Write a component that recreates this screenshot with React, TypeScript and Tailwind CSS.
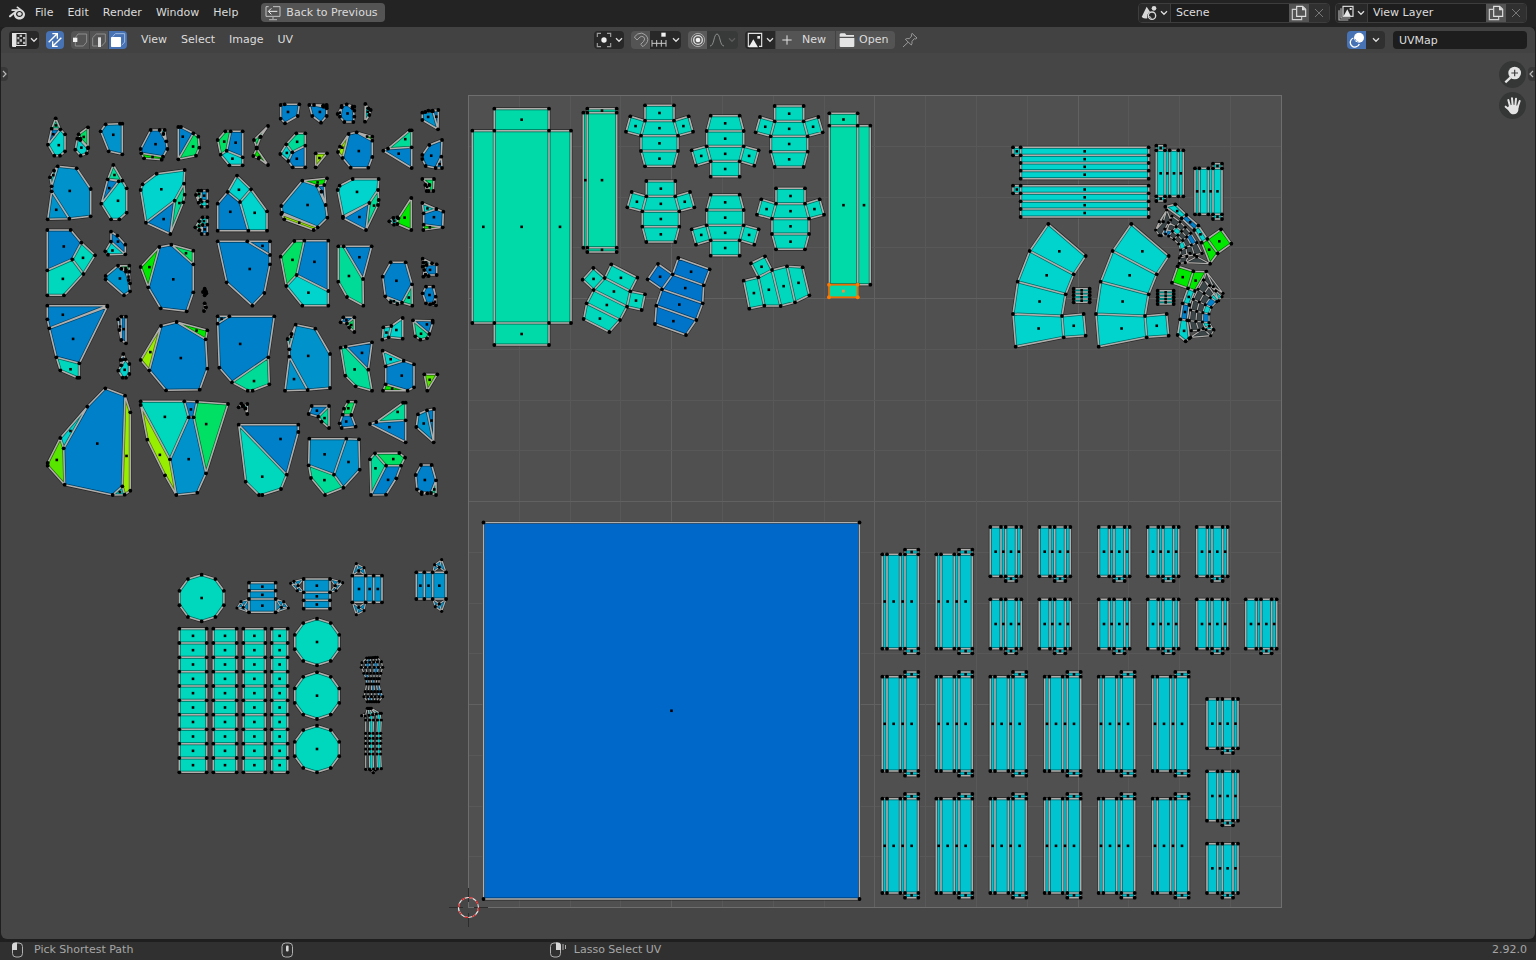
import React from "react";
import { SiBlender } from "react-icons/si";

type Pt = [number, number];
type Face = { fill: string; pts: Pt[] };

const PALETTE: Record<string, string> = {
  b: "#0080c8",
  l: "#0092ca",
  c: "#00d4cc",
  t: "#00d8be",
  n: "#00d9a8",
  m: "#00dc98",
  g: "#00e064",
  G: "#00e800",
  k: "#58e600",
  y: "#98ee00",
  r: "#0074c8",
  a: "#00c4d0",
  x: "#3c4648",
};

/* Islands are stored in thirds of a pixel, relative to the origin of their sheet. */
const place = (ox: number, oy: number, x: number, y: number): Pt => [ox + x / 3, oy + y / 3];

function sheet(ox: number, oy: number, source: string): Face[] {
  return source
    .trim()
    .split("\n")
    .map((line) => {
      const [key, ...rest] = line.trim().split(/\s+/);
      return {
        fill: PALETTE[key],
        pts: rest.map((p) => {
          const [x, y] = p.split(",").map(Number);
          return place(ox, oy, x, y);
        }),
      };
    });
}

/* A grid of rectangles between the given column and row positions. */
function grid(ox: number, oy: number, key: string, xs: number[], ys: number[]): Face[] {
  const out: Face[] = [];
  for (let i = 0; i + 1 < xs.length; i++)
    for (let j = 0; j + 1 < ys.length; j++)
      out.push({
        fill: PALETTE[key],
        pts: [
          place(ox, oy, xs[i], ys[j]),
          place(ox, oy, xs[i + 1], ys[j]),
          place(ox, oy, xs[i + 1], ys[j + 1]),
          place(ox, oy, xs[i], ys[j + 1]),
        ],
      });
  return out;
}

/* A strip of quads spanned between two polylines. */
function ribbon(ox: number, oy: number, keys: string, a: Pt[], b: Pt[], n: number): Face[] {
  const out: Face[] = [];
  const at = (i: number, t: number): Pt =>
    place(ox, oy, a[i][0] + (b[i][0] - a[i][0]) * t, a[i][1] + (b[i][1] - a[i][1]) * t);
  for (let i = 0; i + 1 < a.length; i++)
    for (let j = 0; j < n; j++)
      out.push({
        fill: PALETTE[keys[(i * n + j) % keys.length]],
        pts: [at(i, j / n), at(i, (j + 1) / n), at(i + 1, (j + 1) / n), at(i + 1, j / n)],
      });
  return out;
}

function barrel(x: number, y: number, s: number): Face[] {
  const rows: Pt[][] = [
    [[0, 0], [87, 0], [87, 46], [0, 46]],
    [[0, 46], [87, 46], [99, 91], [-12, 91]],
    [[-12, 91], [99, 91], [99, 137], [-12, 137]],
    [[-12, 137], [99, 137], [87, 183], [0, 183]],
    [[-44, 33], [0, 46], [-12, 91], [-57, 79]],
    [[87, 46], [131, 33], [144, 79], [99, 91]],
  ];
  return rows.map((r) => ({ fill: PALETTE.t, pts: r.map(([px, py]) => place(460, 90, x + px, y + py * s)) }));
}

function disc(x: number, y: number): Face {
  const pts: Pt[] = [];
  for (let i = 0; i < 10; i++) {
    const a = (i * Math.PI) / 5;
    pts.push(place(160, 550, x + 70 * Math.sin(a), y - 70 * Math.cos(a)));
  }
  return { fill: PALETTE.t, pts };
}

function tallPlank(x: number, y: number): Face[] {
  return [
    ...grid(870, 510, "a", [x, x + 14, x + 54, x + 68, x + 108], [y, y + 283]),
    ...grid(870, 510, "a", [x + 68, x + 108], [y - 14, y]),
    ...grid(870, 510, "a", [x + 68, x + 108], [y + 283, y + 297]),
  ];
}

function shortPlank(x: number, y: number): Face[] {
  return [
    ...grid(870, 510, "a", [x, x + 32, x + 46, x + 78, x + 93], [y, y + 148]),
    ...grid(870, 510, "a", [x + 46, x + 78], [y + 148, y + 162]),
  ];
}

const rocksA = sheet(30, 90, `
m 77,85 65,116 91,118
b 65,116 91,118 54,164
c 91,118 105,133 105,184 90,197 73,197 54,164
g 174,112 174,172 151,146 146,133
c 151,150 174,175 170,190 152,197 136,179 142,146
l 227,103 270,101 277,101 277,193 236,184 212,124
b 362,120 389,120 409,154 412,177 399,200 334,190 332,177
G 334,190 399,200 395,209 342,205
c 389,120 404,120 409,154 400,132
b 445,111 453,111 490,130 445,208
g 490,130 505,140 508,173 498,197 445,208
g 586,124 602,124 590,182 572,194 563,150
b 602,124 638,124 638,202 590,182
c 572,194 590,182 638,202 638,226 598,226
l 83,229 140,235 182,297 182,379 118,386 65,304 65,289
l 65,304 118,386 53,388
c 83,229 72,242 60,262 65,289
m 250,225 277,272 233,268
b 233,268 266,274 214,341
c 266,274 277,272 290,295 290,368 268,388 243,388 214,341
c 464,240 462,281 434,332 348,398 332,300 338,283 380,251
b 434,332 348,398 421,432
m 462,281 464,314 460,337 421,432 434,332
l 514,302 532,302 532,334 512,330
m 498,315 505,302 514,302 512,330
c 498,315 512,330 532,334 532,350 515,350 506,338
c 532,382 518,382 508,394 518,405 532,404
b 518,405 532,404 532,432 515,432
m 508,394 496,412 508,420 518,405
c 621,257 663,298 630,336 593,306
b 593,306 630,336 655,422 563,422 563,341
c 663,298 711,364 711,422 655,422 630,336
b 52,420 122,420 154,458 127,508 52,541
t 154,458 195,496 160,552 127,508
t 52,541 127,508 160,552 102,616 52,616
b 243,425 262,437 286,464 286,493 243,455
c 243,455 286,493 234,494 226,484
l 264,527 274,536 288,545 296,570 300,604 282,616 227,568 227,558
g 264,527 298,527 298,545 288,540
b 288,545 298,545 300,580 296,570
b 424,464 490,523 490,607 470,664 392,655 355,592 388,471
G 388,471 332,531 355,592
g 424,464 490,482 490,523
x 524,596 528,605 519,606
x 524,640 528,652 522,663
x 524,600 529,610 524,616
b 563,454 652,454 720,495 720,523 703,609 667,647 590,577
b 652,454 720,454 720,495
`);

const rocksB = sheet(30, 290, `
b 52,47 232,47 58,115 52,88
b 232,50 148,220 79,202 58,115
t 79,202 148,220 148,263 142,263 91,241
b 264,88 274,80 274,150 268,120
b 274,80 288,80 288,160 274,150
b 280,192 286,208 274,226 272,210
c 286,208 298,222 298,252 288,263 278,263 265,242 274,226
b 393,108 440,96 527,148 532,236 509,299 408,301 358,241
y 393,108 332,210 358,241
G 440,96 532,121 527,148
b 598,79 733,79 715,202 606,277 568,233 563,101
l 563,79 598,79 563,101
m 715,202 718,283 668,302 653,302 606,277
b 226,295 285,317 277,589 248,615 104,584 101,475 172,350
c 172,350 101,475 91,444
k 91,444 101,475 104,584 53,527 53,519
y 285,317 301,367 301,602 284,614 277,589
c 248,615 277,589 284,614
t 332,334 463,334 476,382 420,508 332,345
b 463,334 501,335 491,382 476,382
g 501,335 594,342 528,550 491,382
l 476,382 491,382 528,550 502,608 439,615 420,508
y 332,345 420,508 439,615 405,556 352,449
x 626,352 634,341 646,356 640,348
c 640,348 652,342 652,372 646,356
b 626,404 805,404 805,426 770,554
t 626,404 770,554 753,597 697,615 687,615 647,575
`);

const rocksC = sheet(240, 90, `
b 122,45 134,43 178,43 173,78 135,100 122,86
b 208,45 250,46 260,50 260,78 243,98 217,78
c 222,45 260,45 260,55 250,50
b 320,43 338,50 343,80 340,96 313,96 300,80 305,48
c 320,43 343,50 343,62 338,55
c 305,52 300,80 293,72
c 376,42 385,55 392,60 388,75 375,95
l 547,68 556,66 578,62 594,118 547,90
b 578,62 595,60 594,118
c 556,66 565,62 595,60 578,64
g 84,108 42,150 50,172 62,140
G 40,198 50,176 84,225 56,205
m 169,130 196,130 196,167 157,187 139,163
c 139,163 157,187 145,213 121,192
b 157,187 196,167 196,232 158,232 145,213
y 227,190 261,190 227,232
b 326,132 350,127 397,152 397,201 385,233 332,233 308,204
y 326,132 300,170 294,186 308,204
G 350,127 397,140 397,152
m 509,121 515,121 515,172 444,176
b 430,182 444,176 515,172 515,234
b 606,150 604,200 587,234 557,228 547,207 547,195 568,165
b 604,200 606,234 587,234
l 187,272 231,287 257,345 262,383 233,412 126,368 124,348
G 187,272 261,265 253,285 231,287
b 231,287 253,285 257,345 244,305
y 124,372 233,412 221,420 133,388
c 338,267 416,267 414,300 388,339 309,380 293,300 299,287
b 388,339 378,420 309,384
m 414,300 416,330 414,345 378,420 388,339
g 547,267 582,267 580,303 566,303 568,285
c 556,285 568,285 560,303
G 514,324 514,420 472,402 475,385
c 448,394 460,384 472,382 472,402 462,404
c 547,339 589,357 551,370
b 551,370 589,357 610,365 608,412 551,404
G 551,404 608,412 550,420
g 163,453 193,452 170,555 139,588 122,500
b 193,452 265,452 265,603 170,555
c 170,555 265,603 265,647 187,647 139,588
b 311,469 395,469 369,567
m 295,469 311,469 369,567 370,647 321,621 295,575
b 452,517 497,517 516,583 486,638 436,619 428,560
m 516,583 517,647 486,638
c 436,619 486,638 472,642 452,636
b 560,525 590,523 590,555 557,555 553,540
c 548,506 576,520 560,525 550,518
g 550,518 560,525 553,540 548,530
m 553,540 566,558 550,560
b 558,590 580,590 587,620 580,640 558,640 548,610
c 558,640 580,640 588,646 570,643
m 580,640 587,620 588,646
`);

const rocksD = sheet(240, 290, `
b 310,82 343,82 321,100 302,97
g 343,82 343,126 328,112 321,100
c 488,84 488,146 446,142 454,108
c 430,112 454,108 446,142 427,149
b 519,91 578,92 578,98 568,132
m 519,91 568,132 561,145 541,149 526,139
l 167,104 226,116 270,192 270,294 203,300 148,200 148,178
l 148,200 203,300 135,302
c 167,104 155,132 143,147 148,178
b 317,170 396,157 385,239
m 302,173 317,170 385,239 396,302 347,289 316,257
c 428,182 491,212 437,229
b 437,229 491,212 522,223 522,292 503,302 437,283
G 437,283 503,302 429,302
k 553,253 592,253 562,302
b 215,348 267,348 235,380 206,372
m 267,348 267,414 245,395 235,380
g 324,335 347,335 334,375 308,374 312,356
b 308,374 334,375 347,410 305,414 299,400
m 489,338 497,338 497,391 409,396
b 390,402 409,396 497,391 497,457
l 534,373 561,361 581,457 529,411
b 561,361 582,357 581,457
l 208,446 319,446 282,554 206,526
l 319,446 357,448 359,539 310,593 282,554
m 206,526 282,554 310,593 255,615 213,564
g 405,490 478,489 495,503 483,527 438,527
m 390,508 405,490 438,527 393,615
b 438,527 483,527 469,565 438,614 393,615
b 543,525 575,525 588,571 573,609 545,607 531,598 527,555
m 588,571 588,615 573,609
c 531,598 545,607 562,610 545,612
`);

const hourglass = ribbon(160, 550, "xbxxxxb",
  [[620, 324], [606, 338], [604, 352], [612, 370], [618, 386], [620, 402], [616, 425], [612, 440], [622, 455]],
  [[652, 322], [664, 335], [668, 352], [662, 370], [658, 386], [656, 402], [662, 425], [668, 440], [656, 455]], 5);
const column = ribbon(160, 550, "xcxc",
  [[622, 475], [616, 498], [617, 510], [617, 550], [617, 565], [617, 580], [617, 597], [617, 612], [617, 658]],
  [[634, 475], [660, 490], [664, 510], [662, 550], [662, 565], [662, 580], [662, 597], [662, 612], [664, 656]], 4);

const wings = sheet(160, 550, `
l 267,147 243,155 250,172
l 243,155 231,174 250,172
l 231,174 267,187 250,172
l 267,147 250,172 267,187
l 347,147 371,155 364,172
l 371,155 385,174 364,172
l 385,174 347,187 364,172
l 347,147 364,172 347,187
l 431,87 402,94 414,107
l 402,94 392,100 414,107
l 392,100 412,122 414,107
l 412,122 431,127 414,107
l 510,87 538,94 526,107
l 538,94 548,98 526,107
l 548,98 528,122 526,107
l 528,122 510,127 526,107
l 577,77 589,41 596,62
l 589,41 612,53 596,62
l 612,53 617,77 596,62
l 577,157 589,194 596,172
l 589,194 612,182 596,172
l 612,182 617,157 596,172
l 858,67 845,29 838,52
l 845,29 824,44 838,52
l 824,44 818,67 838,52
l 858,147 845,184 838,162
l 845,184 826,170 838,162
l 826,170 818,147 838,162
x 605,497 618,490 618,500
x 650,492 664,490 660,502
x 632,660 646,660 640,668
`);

const props = [
  ...grid(160, 550, "l", [267, 347], [98, 122, 147, 187]),
  ...grid(160, 550, "l", [431, 510], [87, 127, 151, 176]),
  ...grid(160, 550, "l", [577, 617, 641, 666], [77, 157]),
  ...grid(160, 550, "l", [769, 793, 818, 858], [67, 147]),
  ...[[58, 140], [160, 230], [250, 316], [335, 383]].flatMap((xs) =>
    grid(160, 550, "t", xs, [236, 279, 322, 365, 408, 451, 494, 538, 581, 624, 667])
  ),
  disc(125, 144),
  disc(471, 276),
  disc(471, 437),
  disc(471, 597),
];

const crates = [
  ...sheet(460, 90, `
n 103,56 267,56 267,122 103,122
n 37,122 103,122 103,699 37,699
n 103,122 267,122 267,699 103,699
n 267,122 333,122 333,699 267,699
n 103,699 267,699 267,765 103,765
n 382,56 470,56 470,68 382,68
n 370,68 382,68 382,473 370,473
n 382,68 470,68 470,473 382,473
n 382,473 470,473 470,486 382,486
n 1108,70 1193,70 1193,107 1108,107
n 1108,107 1193,107 1193,584 1108,584
n 1193,107 1231,107 1231,584 1193,584
t 454,523 532,563 511,604 434,564
t 434,564 511,604 501,650 401,600
t 401,600 501,650 480,690 380,640
t 380,640 480,690 448,726 371,687
t 400,534 434,564 401,600 368,569
t 511,604 555,613 545,660 501,650
r 655,504 749,538 731,586 638,553
r 638,553 731,586 728,640 606,598
r 606,598 728,640 709,690 589,647
r 589,647 709,690 678,735 585,702
r 594,522 638,553 606,598 563,568
t 851,572 895,562 913,647 868,656
t 895,562 936,540 962,648 913,647
t 936,540 981,529 1005,637 962,648
t 981,529 1028,532 1048,616 1005,637
t 873,520 915,499 936,540 895,562
`),
  ...barrel(555, 46, 1),
  ...barrel(944, 48, 1),
  ...barrel(559, 273, 1),
  ...barrel(948, 295, 1),
  ...barrel(752, 260, -1),
  ...barrel(752, 497, -1),
];

const ARCH = `
c 145,282 257,378 221,433 89,363
c 89,363 221,433 197,493 53,455
c 53,455 197,493 186,558 39,552
c 39,552 186,558 191,622 47,650
c 186,558 251,552 257,617 191,622
`;

const arches = [
  ...sheet(1000, 130, ARCH),
  ...sheet(1083, 130, ARCH),
  ...sheet(1000, 130, `
c 496,230 526,223 559,255 545,265
b 545,265 559,255 595,287 583,300
c 583,300 595,287 622,327 605,338
G 605,338 622,327 653,370 630,401
G 622,327 663,298 694,341 653,370
G 533,409 580,424 564,475 516,458
G 580,424 619,425 585,483 564,475
c 564,475 585,483 568,525 548,520
b 548,520 568,525 562,571 541,568
c 541,568 562,571 568,625 557,634 533,615
`),
  ...grid(1000, 130, "c", [62, 446], [52, 76, 99, 122, 146]),
  ...grid(1000, 130, "c", [39, 62], [52, 76]),
  ...grid(1000, 130, "c", [62, 446], [167, 190, 214, 237, 261]),
  ...grid(1000, 130, "c", [39, 62], [167, 190]),
  ...grid(1000, 130, "c", [469, 495, 509, 535, 550], [61, 199]),
  ...grid(1000, 130, "c", [469, 495], [47, 61]),
  ...grid(1000, 130, "c", [469, 495], [199, 213]),
  ...grid(1000, 130, "c", [585, 598, 625, 639, 666], [115, 253]),
  ...grid(1000, 130, "c", [639, 666], [101, 115]),
  ...grid(1000, 130, "c", [639, 666], [253, 267]),
  ...grid(1000, 130, "c", [221, 269], [476, 486, 496, 507, 517]),
  ...grid(1000, 130, "c", [473, 521], [482, 492, 502, 512, 522]),
];

const archDetail = [
  ...sheet(1000, 130, `
c 500,240 490,275 467,300 478,275
x 500,240 512,270 497,312 478,316 467,300
x 630,401 556,398 590,380
x 556,398 538,400 542,378 570,370
x 619,425 669,490 640,470
x 619,425 640,470 656,512 612,450
x 572,622 632,617 610,596
x 632,617 642,600 628,588 610,596
`),
  ...ribbon(1000, 130, "xxbxcxx",
    [[516, 258], [540, 276], [556, 292], [572, 310], [590, 338], [606, 370]],
    [[484, 317], [506, 318], [522, 328], [536, 342], [542, 360], [538, 384]], 3),
  ...ribbon(1000, 130, "xxcxxb",
    [[610, 450], [594, 478], [580, 508], [572, 540], [568, 572], [574, 602]],
    [[666, 500], [650, 515], [634, 532], [627, 552], [627, 578], [640, 598]], 3),
];

const planks = [
  ...[37, 199].flatMap((x) => tallPlank(x, 133)),
  ...[37, 199, 361, 524, 686, 848].flatMap((x) => [...tallPlank(x, 500), ...tallPlank(x, 866)]),
  ...[361, 508, 686, 833, 980].flatMap((x) => shortPlank(x, 51)),
  ...[361, 508, 686, 833, 980, 1127].flatMap((x) => shortPlank(x, 268)),
  ...[567, 784, 1001].flatMap((y) => shortPlank(1011, y)),
];

const floor: Face[] = [{ fill: "#0068c8", pts: [[483.5, 522.5], [859.5, 522.5], [859.5, 899], [483.5, 899]] }];

const outline = (faces: Face[]) =>
  faces.map((f) => "M" + f.pts.map(([x, y]) => `${x.toFixed(1)} ${y.toFixed(1)}`).join("L") + "Z").join("");

function Islands({ faces, dense = false }: { faces: Face[]; dense?: boolean }) {
  const edges = outline(faces);
  const verts = new Map<string, Pt>();
  faces.forEach((f) => f.pts.forEach((p) => verts.set(`${p[0].toFixed(1)},${p[1].toFixed(1)}`, p)));
  return (
    <g>
      {faces.map((f, i) => (
        <path key={i} d={outline([f])} fill={f.fill} />
      ))}
      <path d={edges} fill="none" stroke="#000" strokeOpacity={0.5} strokeWidth={dense ? 2.2 : 3} strokeLinejoin="round" />
      <path d={edges} fill="none" stroke="#b0aeac" strokeWidth={dense ? 1.2 : 1.6} strokeLinejoin="round" />
      {[...verts.entries()].map(([k, [x, y]]) => (
        <circle key={k} cx={x} cy={y} r={dense ? 1.6 : 1.9} />
      ))}
      {!dense &&
        faces.map((f, i) => {
          const cx = f.pts.reduce((s, p) => s + p[0], 0) / f.pts.length;
          const cy = f.pts.reduce((s, p) => s + p[1], 0) / f.pts.length;
          return <rect key={i} x={cx - 1.3} y={cy - 1.3} width={2.6} height={2.6} />;
        })}
    </g>
  );
}

function UVCanvas() {
  const lines = Array.from({ length: 15 }, (_, i) => i + 1);
  return (
    <svg className="block h-full w-full" viewBox="1 53 1534 886" role="img" aria-label="UV layout">
      <rect x={468.5} y={95.5} width={813} height={812} fill="#505050" />
      {lines.map((i) => (
        <g key={i} stroke={i % 4 === 0 ? "#616161" : "#585858"} strokeWidth={1}>
          <path d={`M${Math.floor(468.5 + i * 50.8) + 0.5} 96V907`} />
          <path d={`M469 ${Math.floor(907.5 - i * 50.75) + 0.5}H1281`} />
        </g>
      ))}
      <rect x={468.5} y={95.5} width={813} height={812} fill="none" stroke="#6e6e6e" />
      {[rocksA, rocksB, rocksC, rocksD].map((faces, i) => (
        <Islands key={i} faces={faces} />
      ))}
      <Islands faces={wings} dense />
      {[props, crates, arches, planks, floor].map((faces, i) => (
        <Islands key={i} faces={faces} />
      ))}
      <Islands faces={[...hourglass, ...column, ...archDetail]} dense />
      <g fill="#ff7a00">
        <rect x={829} y={284.7} width={28.7} height={12.6} fill="#00d9a8" stroke="#ee6a00" strokeWidth={1.8} />
        {[829, 857.7].map((x) => [284.7, 297.3].map((y) => <circle key={`${x}-${y}`} cx={x} cy={y} r={2} />))}
        <rect x={842} y={289.7} width={2.8} height={2.8} fill="#ff8a3c" />
      </g>
      <g fill="none">
        <path d="M449 907.500h14M474 907.500h14M468.500 888v14M468.500 913v14" stroke="#2c2c2c" />
        <circle cx={468.5} cy={907.5} r={10} stroke="#e8e8e8" strokeWidth={1.2} />
        <circle cx={468.5} cy={907.5} r={10} stroke="#e02020" strokeWidth={1.2} strokeDasharray="3.93 3.93" />
      </g>
    </svg>
  );
}

function Chevron({ dim = false }: { dim?: boolean }) {
  return (
    <svg width="8" height="6" viewBox="0 0 8 6" fill="none" stroke={dim ? "#5c5c5c" : "#dcdcdc"} strokeWidth="1.3">
      <path d="M1 1.300l3 3 3-3" />
    </svg>
  );
}

function Icon({ children, className = "size-4" }: { children: React.ReactNode; className?: string }) {
  return (
    <svg viewBox="0 0 48 48" fill="none" className={`${className} shrink-0`}>
      {children}
    </svg>
  );
}

const SceneIcon = () => (
  <Icon>
    <path d="M17 5L2 36q8 6 17 4-3-14 8-20z" fill="#d8d8d8" />
    <circle cx="39" cy="10" r="7" fill="#d8d8d8" />
    <circle cx="33" cy="32" r="11" stroke="#d8d8d8" strokeWidth="4" />
    <path d="M26 33a7 7 0 0 0 6 7" stroke="#d8d8d8" strokeWidth="3" />
  </Icon>
);

const LayersIcon = () => (
  <Icon>
    <path d="M3 16v29h28M9 10v29h28" stroke="#b4b4b4" strokeWidth="3.500" />
    <rect x="15" y="4" width="30" height="30" stroke="#e0e0e0" strokeWidth="3.500" />
    <path d="M17 33l11-20 10 20z" fill="#e8e8e8" />
    <rect x="35" y="9" width="6" height="6" fill="#e0e0e0" />
  </Icon>
);

const CopyIcon = () => (
  <Icon>
    <path d="M15 13H4v31h28v-9" stroke="#cfcfcf" strokeWidth="3.500" />
    <path d="M17 4h18l9 9v21H17z" stroke="#e0e0e0" strokeWidth="3.500" />
    <path d="M33 4v12h11z" fill="#e0e0e0" />
  </Icon>
);

const CloseIcon = () => (
  <Icon>
    <path d="M12 12l24 24M36 12L12 36" stroke="#777" strokeWidth="3" />
  </Icon>
);

function DataBlock({ icon, label, value }: { icon: React.ReactNode; label: string; value: string }) {
  return (
    <div className="flex h-5 overflow-hidden rounded border border-[#3d3d3d] bg-[#1d1d1d]">
      <button aria-label={`Browse ${label}`} className="flex w-[31px] items-center justify-center gap-[3px] bg-[#282828]">
        {icon}
        <Chevron />
      </button>
      <input
        aria-label={label}
        defaultValue={value}
        className="w-[119px] border-l border-[#3d3d3d] bg-[#1d1d1d] px-[5px] text-[#dedede] outline-none"
      />
      <button aria-label={`New ${label}`} className="flex w-5 items-center justify-center bg-[#545454]">
        <CopyIcon />
      </button>
      <button aria-label={`Remove ${label}`} className="flex w-5 items-center justify-center bg-[#303030]">
        <CloseIcon />
      </button>
    </div>
  );
}

function TopBar() {
  return (
    <header className="flex h-[27px] shrink-0 items-center justify-between bg-[#232323] pr-[9px] pb-[2px] pl-2">
      <nav className="flex items-center">
        <button aria-label="Blender" className="flex w-[27px] pl-px text-[#dcdcdc]">
          <SiBlender className="size-4" />
        </button>
        <div className="flex items-center gap-3.5">
          {["File", "Edit", "Render", "Window", "Help"].map((m) => (
            <button key={m}>{m}</button>
          ))}
        </div>
        <button className="ml-[23px] flex h-[19px] items-center gap-[5px] rounded bg-[#545454] pr-[7px] pl-1">
          <Icon>
            <path d="M11 5H3v29h42V5H24" stroke="#c4c4c4" strokeWidth="3" />
            <path d="M24 35v8M12 44h24" stroke="#a4a4a4" strokeWidth="4" />
            <path d="M37 19H11M19 10l-9 9 9 9" stroke="#f0f0f0" strokeWidth="3" />
          </Icon>
          Back to Previous
        </button>
      </nav>
      <div className="flex gap-[5px]">
        <DataBlock icon={<SceneIcon />} label="Scene" value="Scene" />
        <DataBlock icon={<LayersIcon />} label="View Layer" value="View Layer" />
      </div>
    </header>
  );
}

function EditorHeader() {
  return (
    <div className="grid h-[26px] shrink-0 grid-cols-[1fr_auto_1fr] items-center rounded-t-md bg-[#424242] pr-2 pl-2">
      <div className="flex items-center">
        <button aria-label="Editor type" className="flex h-[18px] w-[30px] items-center justify-center gap-[3px] rounded bg-[#282828]">
          <Icon>
            <path d="M3 3h12v42H6q-3 0-3-3z" fill="#e4e4e4" />
            <rect x="15" y="4.500" width="30" height="36" stroke="#e4e4e4" strokeWidth="3" />
            <path d="M26 8h7v7h-7zM36 15h7v7h-7zM19 15h6v7h-6zM26 22h7v7h-7zM36 29h7v7h-7zM19 29h6v7h-6z" fill="#b8b8b8" />
          </Icon>
          <Chevron />
        </button>
        <button aria-label="UV sync selection" aria-pressed="true" className="ml-[7px] flex size-[18px] items-center justify-center rounded bg-[#4772b3]">
          <Icon>
            <path d="M5 31L29 7M16 5h15v15M17 43l26-26M32 43H17V28" stroke="#fff" strokeWidth="4" />
          </Icon>
        </button>
        <div className="ml-[7px] flex gap-px overflow-hidden rounded">
          <button aria-label="Vertex select mode" className="flex h-[18px] w-[18px] items-center justify-center bg-[#545454]">
            <Icon>
              <path d="M10 17l8-11h26v24l-10 12H10V30" stroke="#8c8c8c" strokeWidth="3" />
              <rect x="3" y="17" width="13" height="13" fill="#f0f0f0" />
            </Icon>
          </button>
          <button aria-label="Edge select mode" className="flex h-[18px] w-[18px] items-center justify-center bg-[#545454]">
            <Icon>
              <path d="M20 42H5V17L16 6h27v24L32 42" stroke="#8c8c8c" strokeWidth="3" />
              <rect x="21" y="16" width="9" height="29" fill="#dcdcdc" />
            </Icon>
          </button>
          <button aria-label="Face select mode" aria-pressed="true" className="flex h-[18px] w-[18px] items-center justify-center bg-[#4772b3]">
            <Icon>
              <path d="M8 14l8-9h28v25l-9 10" stroke="#9db9e2" strokeWidth="3" />
              <rect x="3" y="15" width="30" height="30" rx="2" fill="#fff" />
            </Icon>
          </button>
        </div>
        <div className="ml-3.5 flex gap-3.5">
          {["View", "Select", "Image", "UV"].map((m) => (
            <button key={m}>{m}</button>
          ))}
        </div>
      </div>

      <div className="flex items-center gap-[7px] pr-6">
        <button aria-label="Pivot point" className="flex h-[18px] w-[30px] items-center justify-center gap-[3px] rounded bg-[#282828]">
          <Icon>
            <path d="M4 15V4h11M33 4h11v11M44 33v11H33M15 44H4V33" stroke="#9c9c9c" strokeWidth="3.500" />
            <circle cx="24" cy="24" r="8" fill="#f0f0f0" />
          </Icon>
          <Chevron />
        </button>
        <div className="flex overflow-hidden rounded">
          <button aria-label="Snap" className="flex h-[18px] w-[19px] items-center justify-center bg-[#545454]">
            <Icon>
              <path d="M4 15L14 6Q27-1 38 9q12 13 2 25L30 44l-7-7 9-9q6-8 0-13-6-4-11 0l-9 9z" stroke="#a4a4a4" strokeWidth="3" />
            </Icon>
          </button>
          <button aria-label="Snap target" className="flex h-[18px] w-[31px] items-center justify-center gap-[5px] bg-[#282828]">
            <Icon>
              <path d="M3 24v20M17 24v20M31 24v20M45 24v20M3 34h42" stroke="#c8c8c8" strokeWidth="3" />
              <rect x="31" y="2" width="13" height="12" fill="#f0f0f0" />
            </Icon>
            <Chevron />
          </button>
        </div>
        <div className="flex overflow-hidden rounded">
          <button aria-label="Proportional editing" className="flex h-[18px] w-[19px] items-center justify-center bg-[#5a5a5a]">
            <Icon>
              <circle cx="24" cy="24" r="20" stroke="#a8a8a8" strokeWidth="3" />
              <circle cx="24" cy="24" r="13" stroke="#dcdcdc" strokeWidth="4" />
              <circle cx="24" cy="24" r="7" fill="#f4f4f4" />
            </Icon>
          </button>
          <button aria-label="Falloff" className="flex h-[18px] w-[31px] items-center justify-center gap-[3px] bg-[#383a3a]">
            <Icon>
              <path d="M3 42C16 42 14 6 24 6s8 36 21 36" stroke="#8c8c8c" strokeWidth="3" />
            </Icon>
            <Chevron dim />
          </button>
        </div>
        <div className="flex overflow-hidden rounded">
          <button aria-label="Browse image" className="flex h-[18px] w-[30px] items-center justify-center gap-[3px] bg-[#282828]">
            <Icon>
              <path d="M15 43H4V4h40v39h-8" stroke="#e0e0e0" strokeWidth="3.500" />
              <path d="M5 46l14-24 14 24z" fill="#f0f0f0" />
              <rect x="31" y="12" width="8" height="8" fill="#f0f0f0" />
            </Icon>
            <Chevron />
          </button>
          <button className="ml-px flex h-[18px] w-[59px] items-center gap-[7px] bg-[#545454] pl-[3px]">
            <Icon>
              <path d="M24 10v28M10 24h28" stroke="#e4e4e4" strokeWidth="3" />
            </Icon>
            New
          </button>
          <button className="ml-px flex h-[18px] w-[59px] items-center gap-1 bg-[#545454] pl-[3px]">
            <Icon>
              <path d="M2 14V7l3-3h13l4 5h23v5z" fill="#e4e4e4" />
              <path d="M2 18h44v24q0 3-3 3H5q-3 0-3-3z" fill="#e4e4e4" />
            </Icon>
            Open
          </button>
        </div>
        <button aria-label="Pin" className="flex size-4 items-center justify-center">
          <Icon>
            <path d="M30 4l15 14-5 3-3-1-7 8q1 7-2 11L10 22q5-4 12-2l7-8-1-4zM18 31L3 45" stroke="#9a9a9a" strokeWidth="3" strokeLinejoin="round" />
          </Icon>
        </button>
      </div>

      <div className="flex items-center justify-end gap-2">
        <div className="flex overflow-hidden rounded">
          <button aria-label="Show overlays" aria-pressed="true" className="flex h-[18px] w-[19px] items-center justify-center bg-[#4772b3]">
            <Icon>
              <circle cx="30" cy="17" r="15" fill="#fff" />
              <path d="M13 18a14 14 0 1 0 18 18" stroke="#fff" strokeWidth="4" />
              <path d="M19 22q2 7 9 8" stroke="#4772b3" strokeWidth="3" strokeDasharray="5 4" />
            </Icon>
          </button>
          <button aria-label="Overlay options" className="flex h-[18px] w-[19px] items-center justify-center bg-[#303030]">
            <Chevron />
          </button>
        </div>
        <input
          aria-label="Active UV map"
          defaultValue="UVMap"
          className="h-[18px] w-[134px] rounded bg-[#1d1d1d] px-1.5 text-[#dedede] outline-none"
        />
      </div>
    </div>
  );
}

function StatusBar() {
  return (
    <footer className="flex h-[18px] shrink-0 items-center bg-[#303030] pr-[9px] pb-[2px] pl-3 text-[#a6a6a6]">
      <div className="flex w-[17.75%] items-center gap-[11px]">
        <svg width="11" height="16" viewBox="0 0 11 16" fill="none">
          <rect x="0.500" y="1" width="10" height="14" rx="3.500" stroke="#b0b0b0" />
          <path d="M0 8V4q0-3.500 3-3.500h2V8z" fill="#d8d8d8" />
        </svg>
        Pick Shortest Path
      </div>
      <div className="flex w-[17.75%] items-center">
        <svg width="13" height="16" viewBox="0 0 13 16" fill="none">
          <rect x="1" y="1" width="10.500" height="14" rx="3.500" stroke="#b0b0b0" />
          <rect x="5" y="3.500" width="2.600" height="6" rx="1" fill="#d8d8d8" />
        </svg>
      </div>
      <div className="flex items-center gap-2">
        <svg width="16" height="16" viewBox="0 0 16 16" fill="none">
          <rect x="0.500" y="1" width="10" height="14" rx="3.500" stroke="#b0b0b0" />
          <path d="M6 8V.5h2q3 0 3 3.500v4z" fill="#d8d8d8" />
          <path d="M13 2v6M15.500 3v4" stroke="#b0b0b0" />
        </svg>
        Lasso Select UV
      </div>
      <span className="ml-auto">2.92.0</span>
    </footer>
  );
}

export default function App() {
  return (
    <div className="flex h-screen flex-col overflow-hidden bg-[#1f1f1f] font-['DejaVu_Sans',sans-serif] text-[11px] leading-4 text-[#dcdcdc]">
      <TopBar />
      <main className="mx-px mb-[3px] flex min-h-0 flex-1 flex-col overflow-hidden rounded-md bg-[#464646]">
        <EditorHeader />
        <div className="relative min-h-0 flex-1">
          <UVCanvas />
          <button aria-label="Show toolbar" className="absolute top-3.5 left-0 flex h-3.5 w-[7px] items-center justify-center rounded-r bg-[#383838]">
            <svg width="5" height="8" viewBox="0 0 5 8" fill="none" stroke="#b8b8b8" strokeWidth="1.200">
              <path d="M1 1l3 3-3 3" />
            </svg>
          </button>
          <button aria-label="Show sidebar" className="absolute top-3.5 right-0 flex h-3.5 w-[7px] items-center justify-center rounded-l bg-[#383838]">
            <svg width="5" height="8" viewBox="0 0 5 8" fill="none" stroke="#b8b8b8" strokeWidth="1.200">
              <path d="M4 1L1 4l3 3" />
            </svg>
          </button>
          <div className="absolute top-2 right-[9px] flex flex-col gap-1">
            <button aria-label="Zoom view" className="flex size-[27px] items-center justify-center rounded-full bg-[#353737]">
              <svg width="18" height="18" viewBox="0 0 54 54" fill="none">
                <circle cx="32" cy="21" r="19" fill="#e4e4e4" />
                <path d="M20 34L4 49" stroke="#e4e4e4" strokeWidth="7" />
                <path d="M32 11v20M22 21h20" stroke="#3c3c3c" strokeWidth="3.500" />
              </svg>
            </button>
            <button aria-label="Pan view" className="flex size-[27px] items-center justify-center rounded-full bg-[#353737]">
              <svg width="18" height="18" viewBox="0 0 54 54" fill="none">
                <path d="M18 28L13 9M26 26L24 4M34 26l2-21M41 30l6-18M20 42L5 29" stroke="#e4e4e4" strokeWidth="6" strokeLinecap="round" />
                <path d="M15 26q14-6 29 2l-1 12q-3 12-14 12-10 0-15-11l-4-7z" fill="#e4e4e4" />
              </svg>
            </button>
          </div>
        </div>
      </main>
      <StatusBar />
    </div>
  );
}
